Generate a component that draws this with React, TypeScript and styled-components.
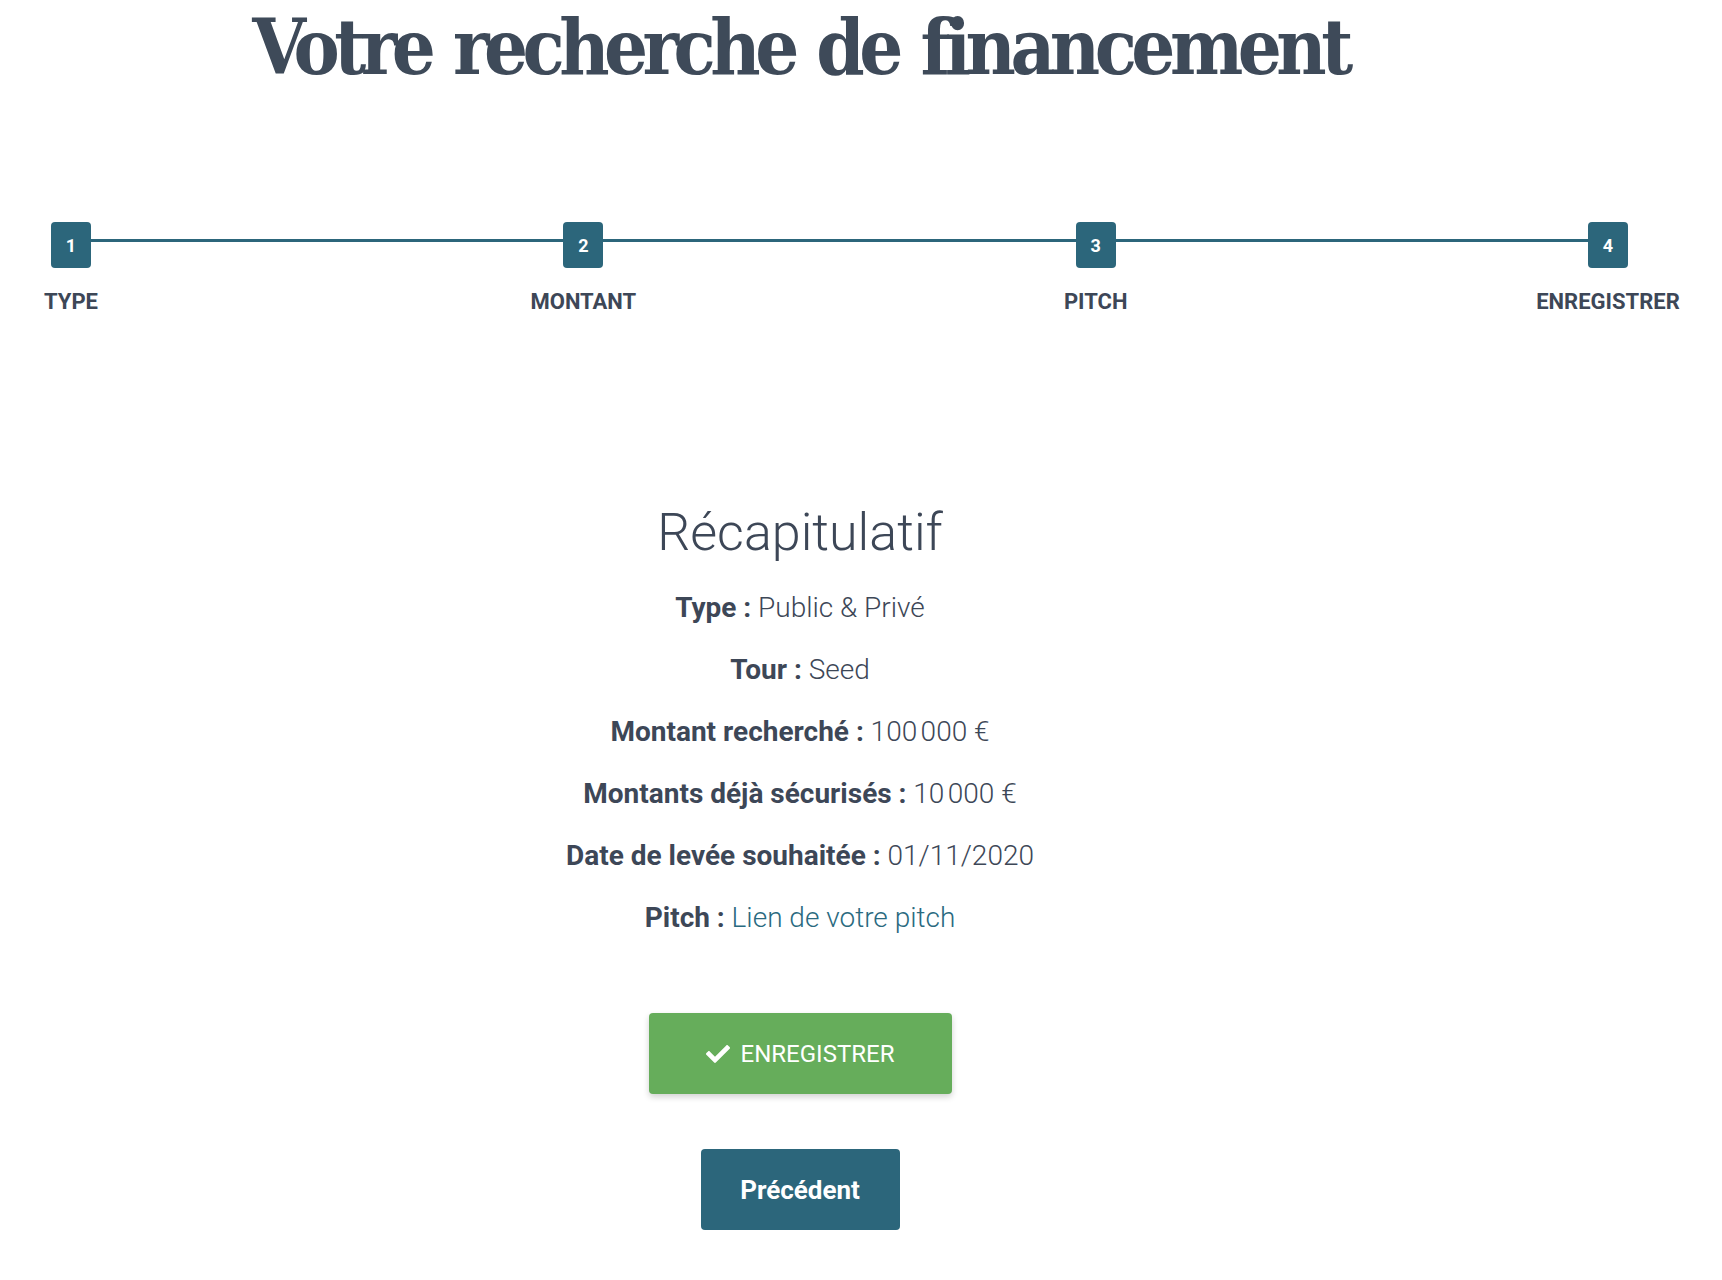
import React from 'react';
import styled, { createGlobalStyle } from 'styled-components';
import { FaCheck } from 'react-icons/fa';

const GlobalStyle = createGlobalStyle`
  body {
    margin: 0;
    background: #ffffff;
    font-family: Roboto, "Liberation Sans", sans-serif;
    color: #3d4757;
  }
`;

const Page = styled.div`
  width: 1722px;
  padding-bottom: 40px;
`;

const Column = styled.div`
  width: 1600px;
  display: flex;
  flex-direction: column;
  align-items: center;
`;

const Title = styled.h1`
  margin: 0;
  padding-top: 2px;
  font-family: "DejaVu Serif Condensed", "DejaVu Serif", serif;
  font-weight: 700;
  font-size: 77px;
  line-height: 90px;
  letter-spacing: -5.5px;
  word-spacing: 4px;
  color: #3e4a59;
`;

const Stepper = styled.div`
  position: relative;
  margin: 130px 0 0 71px;
  width: 1537px;
  display: flex;
  justify-content: space-between;

  &::before {
    content: '';
    position: absolute;
    left: 0;
    right: 0;
    top: 17px;
    height: 3px;
    background: #2c667b;
  }
`;

const Step = styled.div`
  position: relative;
  width: 0;
  display: flex;
  flex-direction: column;
  align-items: center;
`;

const StepBox = styled.div`
  width: 40px;
  height: 46px;
  flex: 0 0 auto;
  border-radius: 4px;
  background: #2c667b;
  color: #ffffff;
  display: flex;
  align-items: center;
  justify-content: center;
  font-weight: 700;
  font-size: 18px;
`;

const StepLabel = styled.div`
  margin-top: 21px;
  white-space: nowrap;
  font-weight: 700;
  font-size: 22px;
  line-height: 26px;
  text-transform: uppercase;
  color: #3d4757;
`;

const Heading = styled.h2`
  margin: 188px 0 0;
  font-weight: 300;
  font-size: 52px;
  line-height: 60px;
  color: #3d4757;
`;

const Summary = styled.div`
  margin-top: 14px;
  display: flex;
  flex-direction: column;
  align-items: center;
`;

const Line = styled.p`
  margin: 0;
  font-size: 28px;
  line-height: 62px;
  font-weight: 300;
  color: #3d4757;

  b {
    font-weight: 700;
  }
`;

const PitchLink = styled.a`
  color: #2a6a80;
  text-decoration: none;
`;

const Button = styled.button<{ variant: 'success' | 'primary' }>`
  border: none;
  border-radius: 4px;
  height: 81px;
  display: flex;
  align-items: center;
  justify-content: center;
  gap: 11px;
  color: #ffffff;
  font-family: Roboto, "Liberation Sans", sans-serif;
  font-size: ${({ variant }) => variant === 'success' ? '24px' : '26px'};
  font-weight: ${({ variant }) => variant === 'success' ? 400 : 700};
  background: ${({ variant }) => variant === 'success' ? '#66ad5b' : '#2c667b'};
  box-shadow: ${({ variant }) => variant === 'success' ? '0 3px 6px rgba(0,0,0,0.18)' : 'none'};
  width: ${({ variant }) => variant === 'success' ? '303px' : '199px'};
  margin-top: ${({ variant }) => variant === 'success' ? '64px' : '55px'};
  cursor: pointer;
`;

const steps = ['Type', 'Montant', 'Pitch', 'Enregistrer'];

const App: React.FC = () => {
  return (
    <Page>
      <GlobalStyle />
      <Column>
        <Title>Votre recherche de financement</Title>
      </Column>

      <Stepper>
        {steps.map((label, i) => (
          <Step key={label}>
            <StepBox>{i + 1}</StepBox>
            <StepLabel>{label}</StepLabel>
          </Step>
        ))}
      </Stepper>

      <Column>
        <Heading>Récapitulatif</Heading>
        <Summary>
          <Line><b>Type :</b> Public &amp; Privé</Line>
          <Line><b>Tour :</b> Seed</Line>
          <Line><b>Montant recherché :</b> 100&#8239;000 €</Line>
          <Line><b>Montants déjà sécurisés :</b> 10&#8239;000 €</Line>
          <Line><b>Date de levée souhaitée :</b> 01/11/2020</Line>
          <Line><b>Pitch :</b> <PitchLink href="#">Lien de votre pitch</PitchLink></Line>
        </Summary>
        <Button variant="success"><FaCheck size={24} /> ENREGISTRER</Button>
        <Button variant="primary">Précédent</Button>
      </Column>
    </Page>
  );
};

export default App;
